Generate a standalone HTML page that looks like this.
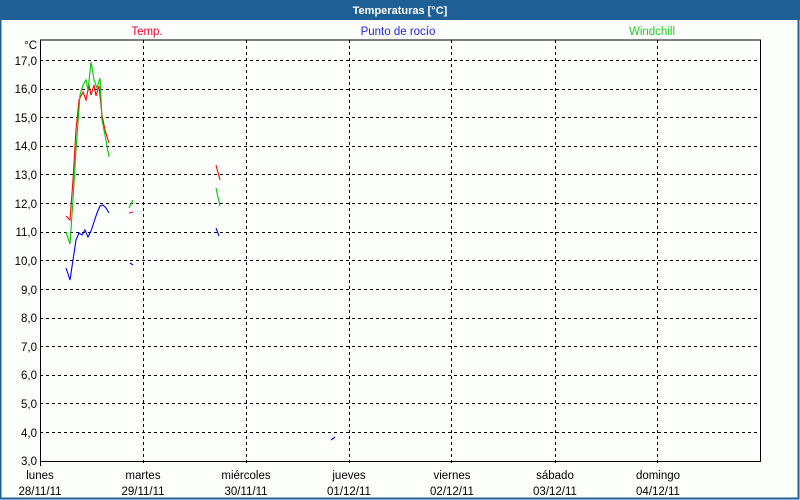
<!DOCTYPE html>
<html><head><meta charset="utf-8"><style>
html,body{margin:0;padding:0;width:800px;height:500px;overflow:hidden;background:#fcfefc}
svg{display:block}
text{font-family:"Liberation Sans","DejaVu Sans",sans-serif;font-size:11.5px}
</style></head><body>
<svg width="800" height="500" xmlns="http://www.w3.org/2000/svg">
<rect x="0" y="0" width="800" height="500" fill="#fcfefc"/>
<rect x="0.5" y="0.5" width="798" height="498" fill="none" stroke="#1e5f96" stroke-width="2"/>
<rect x="0" y="0" width="800" height="20" fill="#1e5f96"/>
<text x="400" y="14" text-anchor="middle" fill="#fff" font-weight="bold" style="font-size:11px">Temperaturas [°C]</text>
<text x="147" y="35" text-anchor="middle" fill="#f00030">Temp.</text>
<text x="398" y="35" text-anchor="middle" fill="#2020f0">Punto de rocío</text>
<text x="652" y="35" text-anchor="middle" fill="#20d020">Windchill</text>
<g stroke="#000" stroke-dasharray="3,3" stroke-width="1" shape-rendering="crispEdges">
<line x1="40" x2="760" y1="60.5" y2="60.5"/><line x1="40" x2="760" y1="89.5" y2="89.5"/>
<line x1="40" x2="760" y1="117.5" y2="117.5"/><line x1="40" x2="760" y1="146.5" y2="146.5"/>
<line x1="40" x2="760" y1="174.5" y2="174.5"/><line x1="40" x2="760" y1="203.5" y2="203.5"/>
<line x1="40" x2="760" y1="232.5" y2="232.5"/><line x1="40" x2="760" y1="260.5" y2="260.5"/>
<line x1="40" x2="760" y1="289.5" y2="289.5"/><line x1="40" x2="760" y1="318.5" y2="318.5"/>
<line x1="40" x2="760" y1="346.5" y2="346.5"/><line x1="40" x2="760" y1="375.5" y2="375.5"/>
<line x1="40" x2="760" y1="403.5" y2="403.5"/><line x1="40" x2="760" y1="432.5" y2="432.5"/>
<line x1="143.5" x2="143.5" y1="40" y2="466"/><line x1="246.5" x2="246.5" y1="40" y2="466"/>
<line x1="349.5" x2="349.5" y1="40" y2="466"/><line x1="451.5" x2="451.5" y1="40" y2="466"/>
<line x1="555.5" x2="555.5" y1="40" y2="466"/><line x1="657.5" x2="657.5" y1="40" y2="466"/>
</g>
<path d="M40.5 40 V461.5 H760.5 V40 H40" fill="none" stroke="#000" stroke-width="1" shape-rendering="crispEdges"/>
<line x1="40.5" y1="461" x2="40.5" y2="466" stroke="#000"/>
<g fill="#000" text-anchor="end">
<text x="37" y="49">°C</text>
<text x="37" y="65">17,0</text><text x="37" y="93">16,0</text><text x="37" y="122">15,0</text>
<text x="37" y="150">14,0</text><text x="37" y="179">13,0</text><text x="37" y="208">12,0</text>
<text x="37" y="236">11,0</text><text x="37" y="265">10,0</text><text x="37" y="294">9,0</text>
<text x="37" y="322">8,0</text><text x="37" y="351">7,0</text><text x="37" y="379">6,0</text>
<text x="37" y="408">5,0</text><text x="37" y="437">4,0</text><text x="37" y="465">3,0</text>
</g>
<g fill="#000" text-anchor="middle">
<text x="40" y="479">lunes</text><text x="40" y="495">28/11/11</text>
<text x="143" y="479">martes</text><text x="143" y="495">29/11/11</text>
<text x="246" y="479">miércoles</text><text x="246" y="495">30/11/11</text>
<text x="349" y="479">jueves</text><text x="349" y="495">01/12/11</text>
<text x="452" y="479">viernes</text><text x="452" y="495">02/12/11</text>
<text x="555" y="479">sábado</text><text x="555" y="495">03/12/11</text>
<text x="658" y="479">domingo</text><text x="658" y="495">04/12/11</text>
</g>
<g fill="none" stroke-width="1.1">
<polyline stroke="#f00" points="66,216 70,220 73,180 76,130 79,100 83,92 86,100 89,85 91,95 94,85 96,96 99,86 102,115 105,130 109,143"/>
<polyline stroke="#00c800" points="66,232 70,244 73,200 76,150 80,95 83,85 86,80 88,90 91,62 94,80 97,88 100,78 102,120 105,135 109,157"/>
<polyline stroke="#0000f0" points="66,268 70,280 73,260 76,240 79,233 82,235 85,230 88,237 91,231 94,222 97,213 100,206 103,205 106,208 109,213"/>
<polyline stroke="#f00" points="129,213 133,212"/>
<polyline stroke="#00c800" points="129,208 133,200"/>
<polyline stroke="#0000f0" points="130,263 133,265"/>
<polyline stroke="#f00" points="216,165 220,180"/>
<polyline stroke="#00c800" points="216,188 220,206"/>
<polyline stroke="#0000f0" points="216,228 219,236"/>
<polyline stroke="#0000f0" points="331,440 335,437"/>
</g>
</svg>
</body></html>
